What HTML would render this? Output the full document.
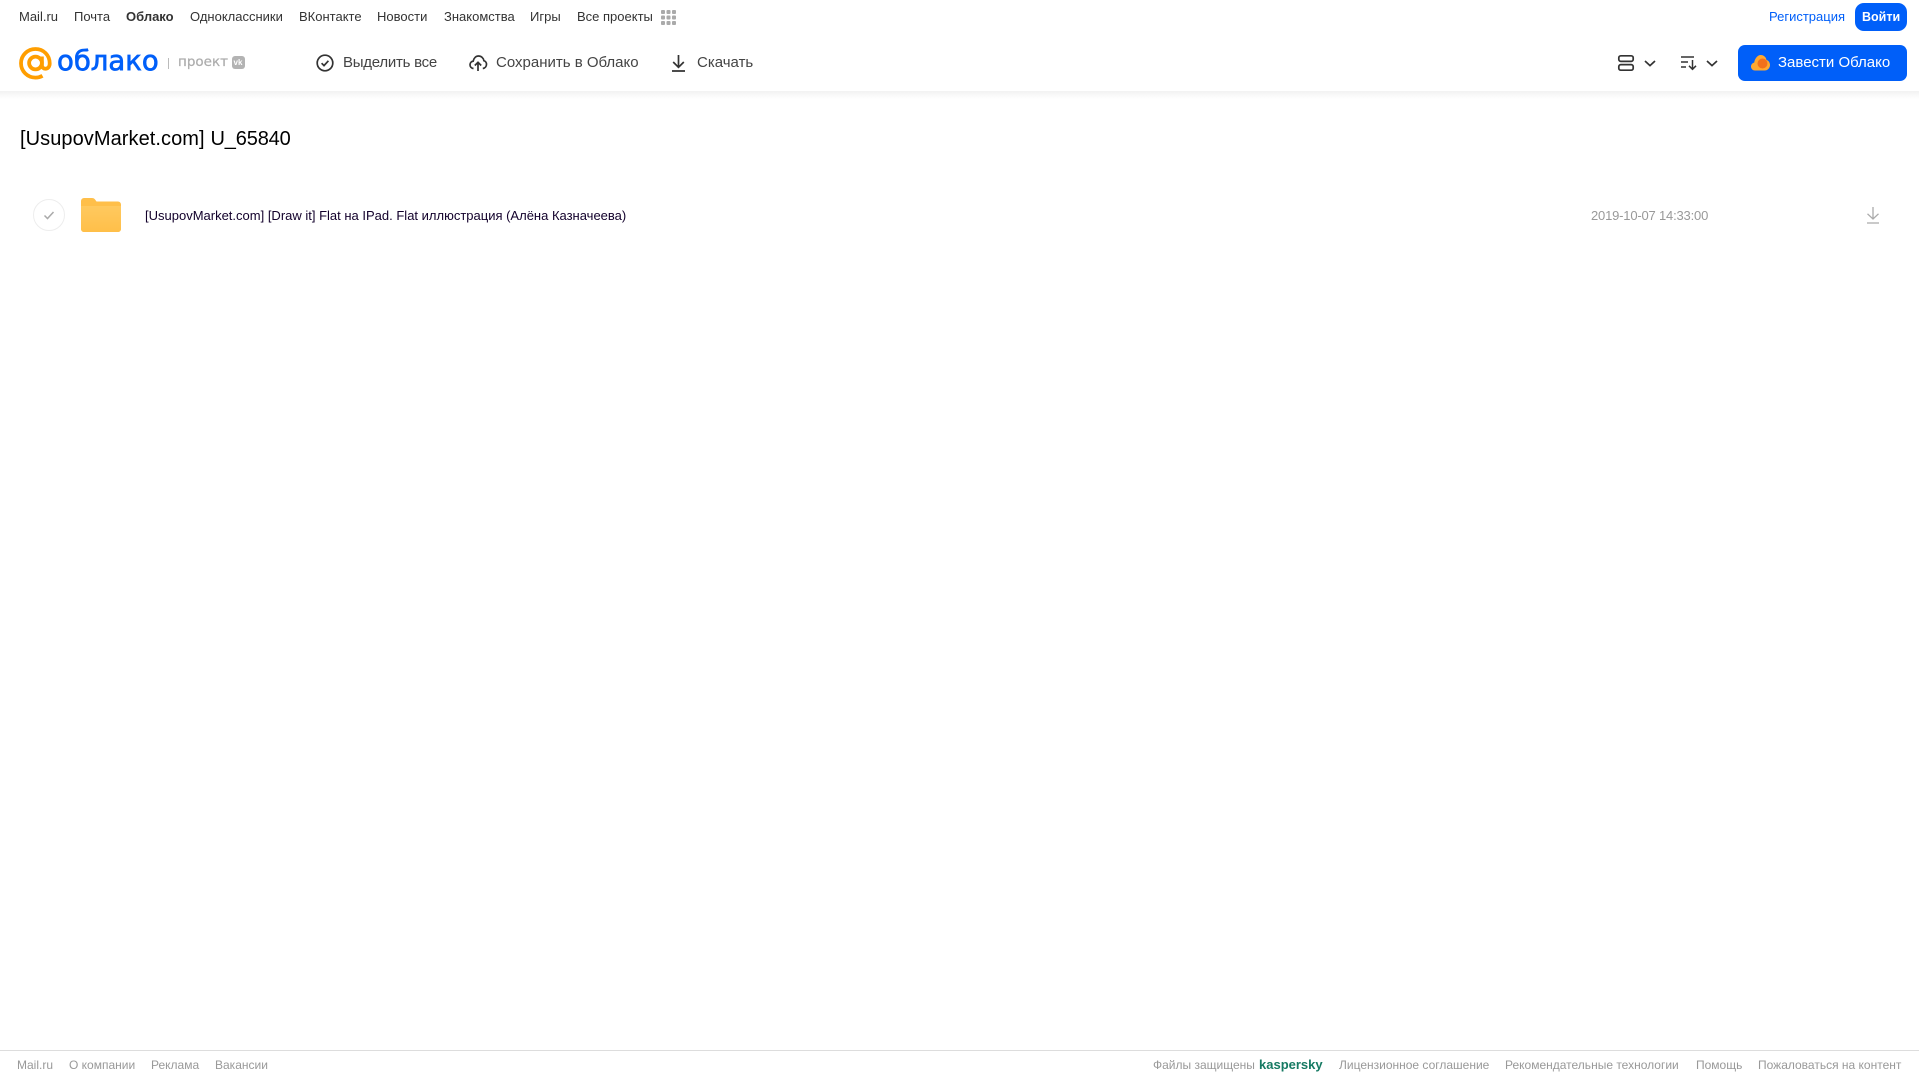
<!DOCTYPE html>
<html lang="ru"><head><meta charset="utf-8"><title>Облако</title>
<style>
html,body{margin:0;padding:0;background:#fff}
body{position:relative;width:1919px;height:1079px;overflow:hidden;font-family:"Liberation Sans",Arial,sans-serif}
.t{position:absolute;white-space:nowrap;line-height:20px;height:20px}
.n{top:7px;font-size:13px;color:#333}
.b{top:53px;font-size:15px;color:#444}
.f{top:1055px;font-size:12px;color:#999}
svg{position:absolute;overflow:visible}
#shadow{position:absolute;left:0;top:91px;width:1919px;height:8px;background:linear-gradient(#f2f2f2,#fff)}
</style></head><body>
<span class="t n" style="left:19px">Mail.ru</span>
<span class="t n" style="left:74px">Почта</span>
<span class="t n" style="left:126px;font-weight:700">Облако</span>
<span class="t n" style="left:190px">Одноклассники</span>
<span class="t n" style="left:299px">ВКонтакте</span>
<span class="t n" style="left:377px">Новости</span>
<span class="t n" style="left:444px">Знакомства</span>
<span class="t n" style="left:530px">Игры</span>
<span class="t n" style="left:577px">Все проекты</span>
<svg style="left:661px;top:10px" width="15" height="15" fill="#aaa"><rect width="4" height="4" rx="1"/><rect x="5.5" width="4" height="4" rx="1"/><rect x="11" width="4" height="4" rx="1"/><rect y="5.5" width="4" height="4" rx="1"/><rect x="5.5" y="5.5" width="4" height="4" rx="1"/><rect x="11" y="5.5" width="4" height="4" rx="1"/><rect y="11" width="4" height="4" rx="1"/><rect x="5.5" y="11" width="4" height="4" rx="1"/><rect x="11" y="11" width="4" height="4" rx="1"/></svg>
<span class="t n" style="left:1769px;color:#005ff9">Регистрация</span>
<div style="position:absolute;left:1855px;top:3px;width:52px;height:28px;border-radius:9px;background:#005ff9"></div>
<span class="t n" style="left:1862px;color:#fff;font-weight:700;font-size:12.5px">Войти</span>
<svg style="left:19px;top:47px" width="33" height="33" viewBox="0 0 33 33" fill="none" stroke="#ff9e00" stroke-width="3.8"><circle cx="16.5" cy="16" r="6.4"/><path d="M22.9 9.5v8.500c0 5.200 7.800 5.200 7.800-1.600C30.700 8 24.400 2 16.500 2S2 8.300 2 16.300 8.400 30.600 16.500 30.600c2.700 0 4.900-.6 7-1.800"/></svg>
<span class="t" style="left:57px;top:41px;height:40px;line-height:40px;font-family:'DejaVu Sans',sans-serif;font-size:27.5px;color:#005ff9;-webkit-text-stroke:.7px #005ff9">облако</span>
<div style="position:absolute;left:168px;top:58px;width:1px;height:11px;background:#bbb"></div>
<span class="t" style="left:178px;top:52px;font-family:'DejaVu Sans',sans-serif;font-size:13.5px;color:#adadad;-webkit-text-stroke:.25px #adadad">проект</span>
<div style="position:absolute;left:232px;top:56px;width:13px;height:13px;border-radius:3px;background:#b3b3b3"></div>
<span class="t" style="left:233.500px;top:57px;height:11px;line-height:11px;font-size:8px;font-weight:700;color:#fff">vk</span>
<svg style="left:316px;top:54px" width="18" height="18" fill="none" stroke="#333" stroke-width="1.7"><circle cx="9" cy="9" r="7.800"/><path d="M5.600 9.200l2.400 2.400 4.400-4.800"/></svg>
<span class="t b" style="left:343px;letter-spacing:-.25px">Выделить все</span>
<svg style="left:469px;top:54px" width="18" height="18" fill="none" stroke="#333" stroke-width="1.7"><path d="M4.500 14.500C2.400 14.300 1 12.700 1 10.800c0-1.900 1.400-3.400 3.200-3.700C4.900 4 7 2 9.500 2c2.800 0 5 2 5.400 4.700 1.500.4 2.600 1.900 2.600 3.600 0 2.100-1.500 3.900-3.700 4.200"/><path d="M9 17V8.500M5.800 11.500L9 8.300l3.200 3.200"/></svg>
<span class="t b" style="left:496px">Сохранить в Облако</span>
<svg style="left:671px;top:54px" width="15" height="18" fill="none" stroke="#333" stroke-width="1.7"><path d="M7.500 1v12M2.200 8l5.300 5.300L12.800 8M1 17h13"/></svg>
<span class="t b" style="left:697px">Скачать</span>
<svg style="left:1618px;top:55px" width="16" height="16" fill="none" stroke="#333" stroke-width="1.7"><rect x=".8" y=".8" width="14.400" height="5.600" rx="2"/><rect x=".8" y="9.600" width="14.400" height="5.600" rx="2"/></svg>
<svg style="left:1644px;top:60px" width="12" height="7" fill="none" stroke="#333" stroke-width="1.7"><path d="M1 1l5 4.600L11 1"/></svg>
<svg style="left:1681px;top:56px" width="16" height="14" fill="none" stroke="#333" stroke-width="1.5"><path d="M0 1h13M0 6h7M0 11h5M11.500 4v9M8 9.800l3.500 3.500 3.500-3.500"/></svg>
<svg style="left:1706px;top:60px" width="12" height="7" fill="none" stroke="#333" stroke-width="1.7"><path d="M1 1l5 4.600L11 1"/></svg>
<div style="position:absolute;left:1738px;top:45px;width:169px;height:36px;border-radius:7px;background:#005ff9"></div>
<svg style="left:1751px;top:55px" width="19" height="16"><path d="M4 15.500C1.800 15.500 0 13.800 0 11.500c0-2 1.400-3.600 3.200-3.900C3.800 3.800 6.400 0 9.800 0c3 0 5.200 2.200 5.700 5 2 .5 3.500 2.500 3.500 5 0 3-2.300 5.500-5.300 5.500z" fill="#ffa930"/><circle cx="11.500" cy="8.500" r="5" fill="#f2711c"/></svg>
<span class="t" style="left:1778px;top:53px;font-size:15px;color:#fff">Завести Облако</span>
<div id="shadow"></div>
<span class="t" style="left:20px;top:125px;height:28px;line-height:28px;font-size:20px;color:#000;letter-spacing:.07px">[UsupovMarket.com]</span>
<span class="t" style="left:210.500px;top:125px;height:28px;line-height:28px;font-size:20px;color:#000;letter-spacing:-.15px">U_65840</span>
<svg style="left:33px;top:199px" width="32" height="32" fill="none"><circle cx="16" cy="16" r="15.500" stroke="#ededed"/><path d="M11.500 16.500l3 3 6-6.500" stroke="#aaa" stroke-width="1.500"/></svg>
<svg style="left:81px;top:198px" width="40" height="34"><defs><linearGradient id="g" x1="0" y1="0" x2="0" y2="1"><stop offset="0" stop-color="#ffc95f"/><stop offset="1" stop-color="#ffbf49"/></linearGradient></defs><path d="M3 0h8c2.500 0 3 1.500 4.500 3.500H37a3 3 0 0 1 3 3V31a3 3 0 0 1-3 3H3a3 3 0 0 1-3-3V3a3 3 0 0 1 3-3z" fill="#ffbf4a"/><path d="M0 8h40v23a3 3 0 0 1-3 3H3a3 3 0 0 1-3-3z" fill="url(#g)"/></svg>
<span class="t" style="left:145px;top:206px;font-size:13px;color:#12002b">[UsupovMarket.com] [Draw it] Flat на IPad. Flat иллюстрация (Алёна Казначеева)</span>
<span class="t" style="left:1591px;top:206px;font-size:13px;color:#999;letter-spacing:-.19px">2019-10-07 14:33:00</span>
<svg style="left:1866px;top:207px" width="14" height="17" fill="none" stroke="#aaa" stroke-width="1.300"><path d="M7 0v12M1.500 6.800L7 12l5.500-5.200M1 16h12"/></svg>
<div style="position:absolute;left:0;top:1050px;width:1919px;height:1px;background:#ddd"></div>
<span class="t f" style="left:17px">Mail.ru</span>
<span class="t f" style="left:69px">О компании</span>
<span class="t f" style="left:151px">Реклама</span>
<span class="t f" style="left:215px">Вакансии</span>
<span class="t f" style="left:1153px">Файлы защищены</span>
<span class="t f" style="left:1259px;font-size:13px;font-weight:700;color:#167a63">kaspersky</span>
<span class="t f" style="left:1339px">Лицензионное соглашение</span>
<span class="t f" style="left:1505px">Рекомендательные технологии</span>
<span class="t f" style="left:1696px">Помощь</span>
<span class="t f" style="left:1758px">Пожаловаться на контент</span>
</body></html>
